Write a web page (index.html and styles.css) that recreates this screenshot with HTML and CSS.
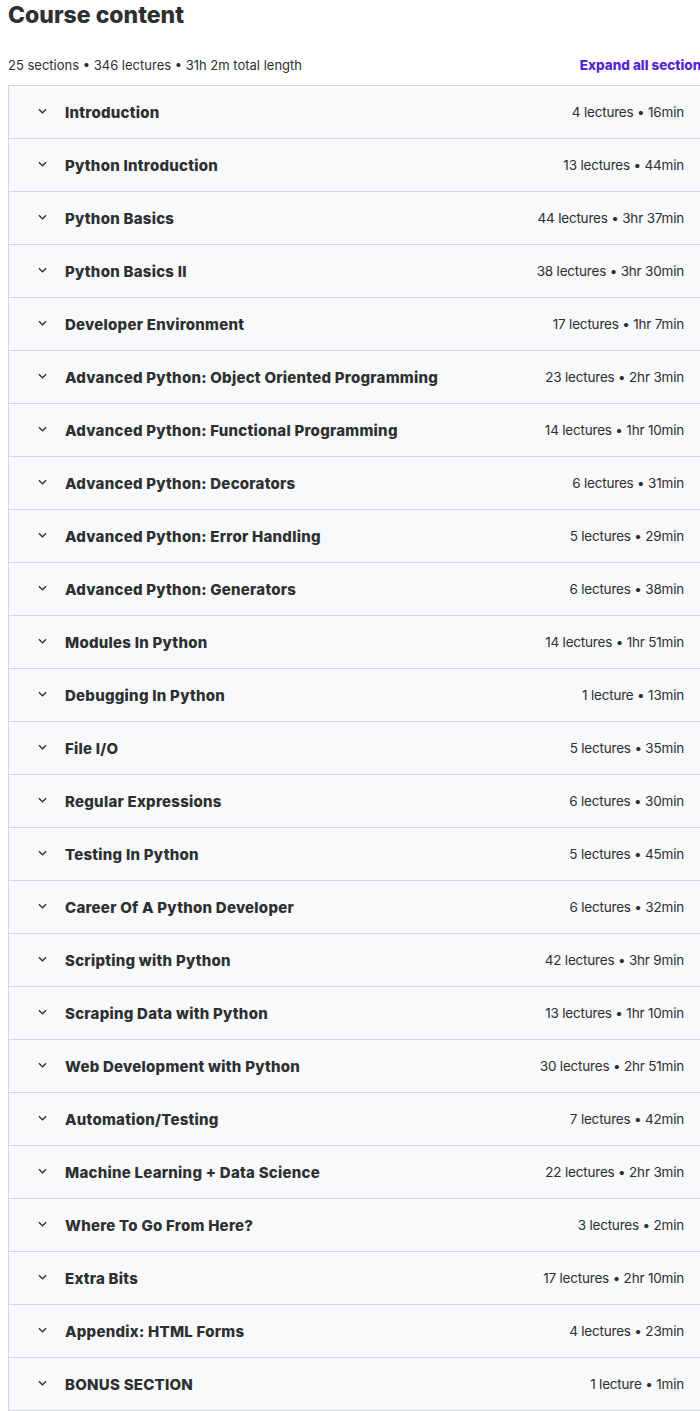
FILE: index.html
```html
<!DOCTYPE html>
<html>
<head>
<meta charset="utf-8">
<link rel="stylesheet" href="styles.css">
</head>
<body>
<div class="page">
  <h2 class="title">Course content</h2>
  <div class="meta">
    <span class="stats">25 sections • 346 lectures • 31h 2m total length</span>
    <span class="expand">Expand all sections</span>
  </div>
  <div class="sections">
    <div class="row"><svg class="chev" viewBox="0 0 10 6"><path d="M1 1l4 4 4-4"/></svg><span class="name">Introduction</span><span class="info">4 lectures • 16min</span></div>
    <div class="row"><svg class="chev" viewBox="0 0 10 6"><path d="M1 1l4 4 4-4"/></svg><span class="name">Python Introduction</span><span class="info">13 lectures • 44min</span></div>
    <div class="row"><svg class="chev" viewBox="0 0 10 6"><path d="M1 1l4 4 4-4"/></svg><span class="name">Python Basics</span><span class="info">44 lectures • 3hr 37min</span></div>
    <div class="row"><svg class="chev" viewBox="0 0 10 6"><path d="M1 1l4 4 4-4"/></svg><span class="name">Python Basics II</span><span class="info">38 lectures • 3hr 30min</span></div>
    <div class="row"><svg class="chev" viewBox="0 0 10 6"><path d="M1 1l4 4 4-4"/></svg><span class="name">Developer Environment</span><span class="info">17 lectures • 1hr 7min</span></div>
    <div class="row"><svg class="chev" viewBox="0 0 10 6"><path d="M1 1l4 4 4-4"/></svg><span class="name">Advanced Python: Object Oriented Programming</span><span class="info">23 lectures • 2hr 3min</span></div>
    <div class="row"><svg class="chev" viewBox="0 0 10 6"><path d="M1 1l4 4 4-4"/></svg><span class="name">Advanced Python: Functional Programming</span><span class="info">14 lectures • 1hr 10min</span></div>
    <div class="row"><svg class="chev" viewBox="0 0 10 6"><path d="M1 1l4 4 4-4"/></svg><span class="name">Advanced Python: Decorators</span><span class="info">6 lectures • 31min</span></div>
    <div class="row"><svg class="chev" viewBox="0 0 10 6"><path d="M1 1l4 4 4-4"/></svg><span class="name">Advanced Python: Error Handling</span><span class="info">5 lectures • 29min</span></div>
    <div class="row"><svg class="chev" viewBox="0 0 10 6"><path d="M1 1l4 4 4-4"/></svg><span class="name">Advanced Python: Generators</span><span class="info">6 lectures • 38min</span></div>
    <div class="row"><svg class="chev" viewBox="0 0 10 6"><path d="M1 1l4 4 4-4"/></svg><span class="name">Modules In Python</span><span class="info">14 lectures • 1hr 51min</span></div>
    <div class="row"><svg class="chev" viewBox="0 0 10 6"><path d="M1 1l4 4 4-4"/></svg><span class="name">Debugging In Python</span><span class="info">1 lecture • 13min</span></div>
    <div class="row"><svg class="chev" viewBox="0 0 10 6"><path d="M1 1l4 4 4-4"/></svg><span class="name">File I/O</span><span class="info">5 lectures • 35min</span></div>
    <div class="row"><svg class="chev" viewBox="0 0 10 6"><path d="M1 1l4 4 4-4"/></svg><span class="name">Regular Expressions</span><span class="info">6 lectures • 30min</span></div>
    <div class="row"><svg class="chev" viewBox="0 0 10 6"><path d="M1 1l4 4 4-4"/></svg><span class="name">Testing In Python</span><span class="info">5 lectures • 45min</span></div>
    <div class="row"><svg class="chev" viewBox="0 0 10 6"><path d="M1 1l4 4 4-4"/></svg><span class="name">Career Of A Python Developer</span><span class="info">6 lectures • 32min</span></div>
    <div class="row"><svg class="chev" viewBox="0 0 10 6"><path d="M1 1l4 4 4-4"/></svg><span class="name">Scripting with Python</span><span class="info">42 lectures • 3hr 9min</span></div>
    <div class="row"><svg class="chev" viewBox="0 0 10 6"><path d="M1 1l4 4 4-4"/></svg><span class="name">Scraping Data with Python</span><span class="info">13 lectures • 1hr 10min</span></div>
    <div class="row"><svg class="chev" viewBox="0 0 10 6"><path d="M1 1l4 4 4-4"/></svg><span class="name">Web Development with Python</span><span class="info">30 lectures • 2hr 51min</span></div>
    <div class="row"><svg class="chev" viewBox="0 0 10 6"><path d="M1 1l4 4 4-4"/></svg><span class="name">Automation/Testing</span><span class="info">7 lectures • 42min</span></div>
    <div class="row"><svg class="chev" viewBox="0 0 10 6"><path d="M1 1l4 4 4-4"/></svg><span class="name">Machine Learning + Data Science</span><span class="info">22 lectures • 2hr 3min</span></div>
    <div class="row"><svg class="chev" viewBox="0 0 10 6"><path d="M1 1l4 4 4-4"/></svg><span class="name">Where To Go From Here?</span><span class="info">3 lectures • 2min</span></div>
    <div class="row"><svg class="chev" viewBox="0 0 10 6"><path d="M1 1l4 4 4-4"/></svg><span class="name">Extra Bits</span><span class="info">17 lectures • 2hr 10min</span></div>
    <div class="row"><svg class="chev" viewBox="0 0 10 6"><path d="M1 1l4 4 4-4"/></svg><span class="name">Appendix: HTML Forms</span><span class="info">4 lectures • 23min</span></div>
    <div class="row"><svg class="chev" viewBox="0 0 10 6"><path d="M1 1l4 4 4-4"/></svg><span class="name">BONUS SECTION</span><span class="info">1 lecture • 1min</span></div>
  </div>
</div>
</body>
</html>
```
FILE: styles.css
```css
html, body {
  margin: 0;
  padding: 0;
  background: #fff;
  overflow: hidden;
}
body {
  font-family: Inter, "Noto Sans", sans-serif;
  color: #2d2f31;
}
.page {
  width: 692px;
  margin-left: 8px;
}
.title {
  margin: 0;
  font-size: 23px;
  font-weight: 800;
  line-height: 30px;
  letter-spacing: 0;
}
.meta {
  display: flex;
  justify-content: space-between;
  align-items: center;
  height: 26px;
  margin-top: 22px;
  margin-bottom: 7px;
  margin-right: -9px;
  font-size: 13px;
}
.stats {
  color: #2d2f31;
}
.expand {
  color: #5624d0;
  font-weight: 800;
  font-size: 13.5px;
  white-space: nowrap;
}
.sections {
  border: 1px solid #d1d7dc;
  border-right: none;
  border-bottom: none;
}
.row {
  display: flex;
  align-items: center;
  height: 52px;
  border-bottom: 1px solid #d1d7dc;
  background: #f7f9fa;
  padding: 0 16px 0 29px;
}
.chev {
  width: 9px;
  height: 6px;
  fill: none;
  stroke: #2d2f31;
  stroke-width: 1.4;
  margin-right: 18px;
  margin-top: -2px;
}
.name {
  flex: 1;
  font-size: 15px;
  font-weight: 800;
  letter-spacing: 0.25px;
}
.info {
  font-size: 13.5px;
  letter-spacing: -0.2px;
}
```
